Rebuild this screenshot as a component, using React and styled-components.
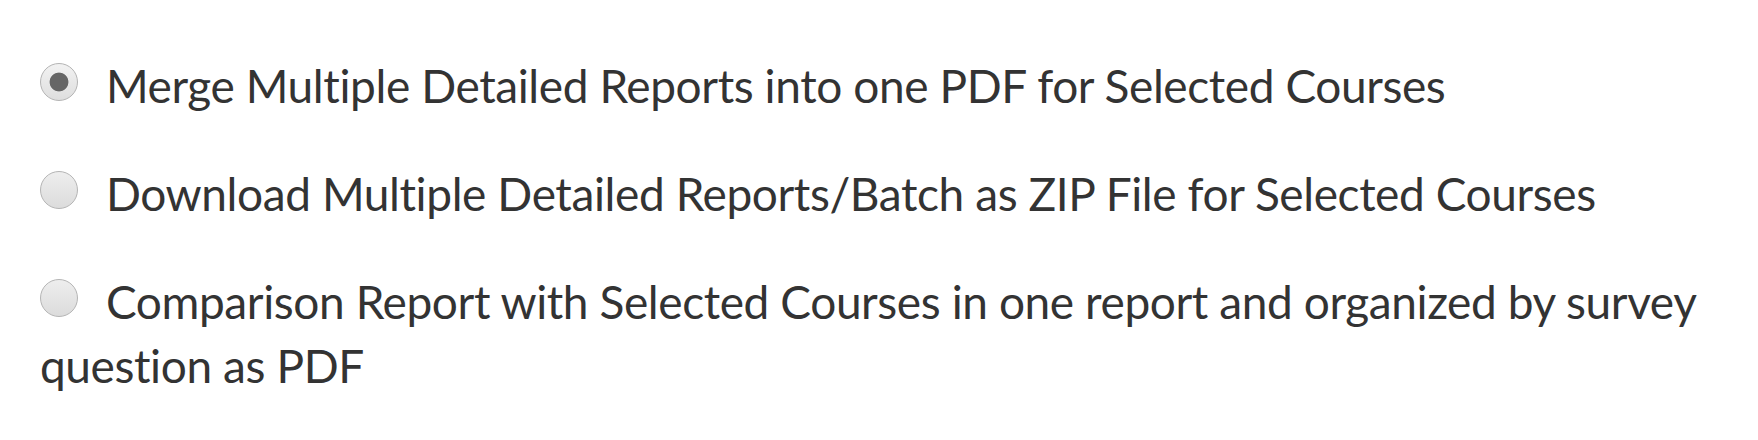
import React, { useState } from "react";
import styled, { createGlobalStyle } from "styled-components";

const GlobalStyle = createGlobalStyle`
  html, body { margin: 0; padding: 0; background: #ffffff; }
  body { font-family: "Lato", "Open Sans", sans-serif; color: #333333; }
`;

const Form = styled.form`
  display: flex;
  flex-direction: column;
  gap: 44px;
  padding: 54px 40px 42px 40px;
`;

const Option = styled.label`
  display: block;
  font-size: 46px;
  letter-spacing: -0.4px;
  line-height: 64px;
  color: #333333;
  cursor: pointer;
`;

const HiddenInput = styled.input`
  position: absolute;
  opacity: 0;
  width: 0;
  height: 0;
  margin: 0;
`;

const Mark = styled.span`
  display: inline-block;
  box-sizing: border-box;
  width: 38px;
  height: 38px;
  margin-right: 28px;
  margin-bottom: 2px;
  vertical-align: baseline;
  border-radius: 50%;
  border: 1.5px solid #b4b4b4;
  background: ${(p) =>
    p.$checked
      ? "radial-gradient(circle, #666666 0, #666666 9px, transparent 9.8px), linear-gradient(#f2f2f2, #dedede)"
      : "linear-gradient(#eeeeee, #dcdcdc)"};
`;

const options = [
  "Merge Multiple Detailed Reports into one PDF for Selected Courses",
  "Download Multiple Detailed Reports/Batch as ZIP File for Selected Courses",
  "Comparison Report with Selected Courses in one report and organized by survey question as PDF",
];

export default function App() {
  const [selected, setSelected] = useState(0);
  return (
    <>
      <GlobalStyle />
      <Form>
        {options.map((text, i) => (
          <Option key={i}>
            <HiddenInput
              type="radio"
              name="reportType"
              checked={selected === i}
              onChange={() => setSelected(i)}
            />
            <Mark $checked={selected === i} />
            {text}
          </Option>
        ))}
      </Form>
    </>
  );
}
